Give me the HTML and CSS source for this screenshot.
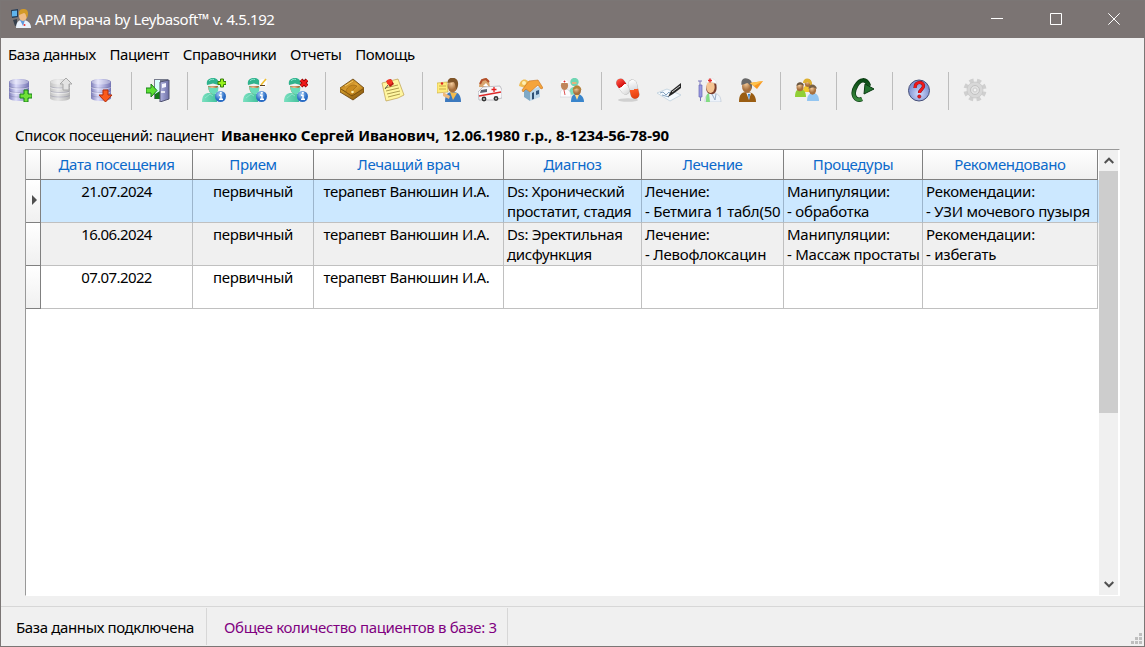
FILE: index.html
```html
<!DOCTYPE html>
<html lang="ru">
<head>
<meta charset="utf-8">
<title>АРМ врача by Leybasoft™ v. 4.5.192</title>
<link rel="stylesheet" href="styles.css">
</head>
<body>
<svg class="defs" width="0" height="0" aria-hidden="true">
  <defs>
    <linearGradient id="gdb"><stop offset="0" stop-color="#7d7db8"/><stop offset=".35" stop-color="#dcdcfa"/><stop offset="1" stop-color="#7474b4"/></linearGradient>
    <linearGradient id="ggray"><stop offset="0" stop-color="#c2c2c2"/><stop offset=".4" stop-color="#e6e6e6"/><stop offset="1" stop-color="#b4b4b4"/></linearGradient>
    <linearGradient id="gdoor"><stop offset="0" stop-color="#b2b4e0"/><stop offset="1" stop-color="#6a6ca4"/></linearGradient>
    <linearGradient id="gteal"><stop offset="0" stop-color="#7be0c0"/><stop offset="1" stop-color="#45c29c"/></linearGradient>
    <radialGradient id="gblue" cx=".4" cy=".3"><stop offset="0" stop-color="#a5cdf6"/><stop offset="1" stop-color="#2a6cc4"/></radialGradient>
    <radialGradient id="ghelp" cx=".5" cy=".65"><stop offset="0" stop-color="#d3ddff"/><stop offset="1" stop-color="#8294d2"/></radialGradient>
    <radialGradient id="gskin" cx=".4" cy=".3"><stop offset="0" stop-color="#f7cf9f"/><stop offset="1" stop-color="#a8703c"/></radialGradient>
    <linearGradient id="ggold" x2="1" y2="1"><stop offset="0" stop-color="#f0b83a"/><stop offset="1" stop-color="#80500a"/></linearGradient>
    <linearGradient id="gflap" x2="1" y2="1"><stop offset="0" stop-color="#a46a10"/><stop offset=".5" stop-color="#e2a636"/><stop offset="1" stop-color="#a8700f"/></linearGradient>
    <linearGradient id="ggreen" y2="1" x2="0"><stop offset="0" stop-color="#0a4a14"/><stop offset="1" stop-color="#3a8a3e"/></linearGradient>
    <linearGradient id="gpill1" gradientUnits="userSpaceOnUse" x1="2" y1="2" x2="12" y2="15"><stop offset="0" stop-color="#ff5040"/><stop offset=".45" stop-color="#d30f0f"/><stop offset=".46" stop-color="#fff"/><stop offset="1" stop-color="#dcdcdc"/></linearGradient>
    <linearGradient id="gpill2" gradientUnits="userSpaceOnUse" x1="15" y1="2" x2="20" y2="21"><stop offset="0" stop-color="#fff"/><stop offset=".5" stop-color="#dadde2"/><stop offset=".51" stop-color="#ff5a22"/><stop offset="1" stop-color="#dd3c0c"/></linearGradient>
    <symbol id="db" viewBox="0 0 24 24"><path d="M1 4c0-4 20-4 20 0v16c0 4-20 4-20 0z"/><ellipse cx="11" cy="4" rx="9.500" ry="2.500" fill="#fff" opacity=".35"/><path d="M1.500 8.500c2 2 17 2 19 0M1.500 13c2 2 17 2 19 0M1.500 17.500c2 2 17 2 19 0" fill="none" stroke="#555580" stroke-opacity=".3" stroke-width=".8"/><path d="M1.500 9.500c2 2 17 2 19 0M1.500 14c2 2 17 2 19 0" fill="none" stroke="#fff" stroke-opacity=".6" stroke-width=".8"/></symbol>
    <symbol id="surgeon" viewBox="0 0 24 24"><path d="M0 24c0-7 3-9 7-9l8 1v8z" fill="url(#gteal)"/><path d="M6 8c0 4 2 8 5 8s5-4 5-8z" fill="url(#gskin)"/><path d="M5 7C4 2 7 0 11 0s6 2 5.500 7L11 5.500z" fill="#2fb38d"/><path d="M7 3c1-1.500 3-2 5-1.500" stroke="#8be6cd" fill="none"/><path d="M6 8.500l3 1.500h5l2.500-1-.5 4c-2 4-6 4-8.500 1z" fill="#6adcb9"/><path d="M3 20l5-4 3 2" stroke="#a6efda" fill="none" opacity=".6"/><circle cx="18.500" cy="18.500" r="5.500" fill="url(#gblue)"/><path d="M17 17.200h2v3.800m-2 .3h4" stroke="#fff" stroke-width="1.500" fill="none"/><circle cx="18.800" cy="14.800" r="1.100" fill="#fff"/></symbol>
  </defs>
</svg>
<div class="window">
  <header class="titlebar">
    <svg class="app-icon" viewBox="0 0 20 20"><path d="M0 1l7-1v8l-6 1z" fill="#223c58"/><path d="M1 2l5-.5V7l-5 .5z" fill="#5fb4ec"/><path d="M2 11l4-1v4l3 2-5 1z" fill="#36404c"/><path d="M5 19c0-5 2-8 6-8 6 0 9 3 9 8z" fill="#eaf2fc"/><path d="M9 11l3 6 2-6z" fill="#5f9ade"/><ellipse cx="12" cy="7" rx="4" ry="5" fill="#f0bc87"/><path d="M8 6c-1-5 2-6 5-6 4 0 5 4 3 9-1-1-1-5-3-5z" fill="#d39a28"/><circle cx="13.500" cy="16" r="1" fill="#e33"/></svg>
    <h1 class="title">АРМ врача by Leybasoft™ v. 4.5.192</h1>
    <div class="controls">
      <svg viewBox="0 0 12 12"><path d="M0 5.500h12"/></svg>
      <svg viewBox="0 0 12 12"><path d="M.5.5h11v11H.5z"/></svg>
      <svg viewBox="0 0 12 12"><path d="M.3.300l11.400 11.400M11.700.300L.3 11.700"/></svg>
    </div>
  </header>
  <nav class="menu"><span>База данных</span><span>Пациент</span><span>Справочники</span><span>Отчеты</span><span>Помощь</span></nav>
  <div class="toolbar">
    <div class="group">
      <svg viewBox="0 0 24 24"><use href="#db" fill="url(#gdb)"/><path d="M16 12h4v4h4v4h-4v4h-4v-4h-4v-4h4z" fill="#6fe038" stroke="#17821a"/></svg>
      <svg viewBox="0 0 24 24"><use href="#db" fill="url(#ggray)"/><path d="M17 0l6 6h-3v6h-6V6h-3z" fill="#e4e4e4" stroke="#a9a9a9"/></svg>
      <svg viewBox="0 0 24 24"><use href="#db" fill="url(#gdb)"/><path d="M13 12h5v5h4l-6.500 7L9 17h4z" fill="#fa5a1c" stroke="#b62c06"/></svg>
    </div>
    <div class="group">
      <svg viewBox="0 0 24 24"><path d="M8 1h14v20H8z" fill="#777b8c"/><path d="M9 2h5v15H9z" fill="#d9ffff"/><path d="M9 16l5-3v8H9z" fill="#17791b"/><path d="M14 4l9-2v19l-9 3z" fill="url(#gdoor)" stroke="#505271"/><path d="M16 6l4-1v4l-4 1z" fill="#f6f6ff"/><path d="M15 14h4" stroke="#fff" stroke-width="1.500"/><path d="M0 10h5V6l6 6.500L5 19v-4H0z" fill="#5fe036" stroke="#178119"/></svg>
    </div>
    <div class="group">
      <svg viewBox="0 0 24 24"><use href="#surgeon"/><path d="M18.500 1h3v2.500H24v3h-2.500V9h-3V6.500H16v-3h2.500z" fill="#98f01a" stroke="#347d0b"/></svg>
      <svg viewBox="0 0 24 24"><use href="#surgeon"/><circle cx="20" cy="5" r="4" fill="#fff" opacity=".8"/><path d="M18 7l5-6" stroke="#f0bd2c" stroke-width="1.600"/><path d="M17 7.500h5" stroke="#5b4021" stroke-width="1"/></svg>
      <svg viewBox="0 0 24 24"><use href="#surgeon"/><path d="M17 2l6 6m0-6l-6 6" stroke="#8f0808" stroke-width="4"/><path d="M17 2l6 6m0-6l-6 6" stroke="#f11b1b" stroke-width="2.300"/></svg>
    </div>
    <div class="group">
      <svg viewBox="0 0 24 24"><path d="M0 10L13 1l11 9v4L13 22 0 14z" fill="url(#ggold)" stroke="#66400a" stroke-width=".8"/><path d="M1 10L13 2l10 8-10 7z" fill="url(#gflap)"/><path d="M1 11l11 7 11-7" stroke="#7a500c" fill="none"/><path d="M6 14c0-4 4-7 8-7l3 1-5 5 2 3-3 1z" fill="#c98a1e" stroke="#8a5b10" stroke-width=".5"/><path d="M5 8l8-5" stroke="#f5cc6a"/><circle cx="12.500" cy="14" r="1.300" fill="#fff0b0"/></svg>
      <svg viewBox="0 0 24 24"><path d="M1 5l16-4 6 16-6 3-12 3z" fill="#fff6a0" stroke="#bb9e4c" stroke-width=".7"/><path d="M4 10l13-3M5 13l13-3M6 16l13-3M7 19l12-3" stroke="#a49244" stroke-width=".9"/><path d="M5 3l5-2 3 5-4 3z" fill="#b41713"/><circle cx="8.500" cy="4" r="2.800" fill="#f43424"/><path d="M7 7l-3 4" stroke="#555"/></svg>
    </div>
    <div class="group">
      <svg viewBox="0 0 24 24"><path d="M0 5l10-1 1 10-11 1z" fill="#ffeb7a" stroke="#c6a83a" stroke-width=".6"/><path d="M2 8h7M2 11h7" stroke="#c8ab48"/><circle cx="5" cy="5.500" r="1.200" fill="#d22"/><path d="M8 24c0-7 2-10 8-10s8 4 8 10z" fill="#3c79be"/><path d="M13 14l3 8 4-7z" fill="#f4bb4d"/><ellipse cx="15.500" cy="8" rx="4.800" ry="6.500" fill="url(#gskin)"/><path d="M10.500 5c0-5 4-6 7-5 5 2 4 8 2 12-1-3-1-7-3-8z" fill="#805528"/><path d="M6 14l7 4-1 3-6-3z" fill="#efba7c"/></svg>
      <svg viewBox="0 0 24 24"><path d="M1 9c0-9 8-11 10-6l1 6z" fill="#d9a56e"/><path d="M2 6l2-4 4-1 3 3" stroke="#b2502c" stroke-width="2" fill="none"/><path d="M5 8l3-3 3 4z" fill="#fff"/><path d="M0 14l5-5 17-1 2 4v8l-8 2-15 0z" fill="#f8f8fa" stroke="#9c9ca5" stroke-width=".6"/><path d="M3 12l6-1v3l-7 1z" fill="#5a6170"/><path d="M1 18l11-2 11-2" stroke="#de2828" stroke-width="1.300"/><path d="M16 9v5m-2.500-2.500h5" stroke="#e31e1e" stroke-width="1.300"/><circle cx="6" cy="21" r="2.400" fill="#333"/><circle cx="18" cy="20.500" r="2.400" fill="#333"/><circle cx="6" cy="21" r="1" fill="#bbb"/><circle cx="18" cy="20.500" r="1" fill="#bbb"/></svg>
      <svg viewBox="0 0 24 24"><path d="M0 8c1-7 6-8 9-5l3 4-6 3z" fill="#efbd54"/><circle cx="5" cy="5" r="2" fill="#fff0b5"/><path d="M5 9l6 5v9l-6-4z" fill="#7fa9c6"/><path d="M11 13l10-5v11l-10 4z" fill="#bed8ea"/><path d="M3 12l7-9 9-1 5 8-2 1-3-4-8 7-4-3-3 3z" fill="#f5a43a" stroke="#c86e18" stroke-width=".6"/><path d="M13 15l2-1v7l-2 .5z" fill="#2f4f72"/><path d="M17 13l3-1v4l-3 1z" fill="#345981"/></svg>
      <svg viewBox="0 0 24 24"><path d="M9 17c0-6 2-8 5-8s6 3 6 7z" fill="#7cdcbb"/><circle cx="14.500" cy="4" r="4.200" fill="#70d6b3"/><path d="M12 4h4.500v2H12z" fill="#e3b37f"/><path d="M0 19c0-6 1-8 5-8s6 3 6 8z" fill="#fbfbfd" stroke="#c0c6cf" stroke-width=".5"/><ellipse cx="4.500" cy="7.500" rx="3.600" ry="4.600" fill="#c08458"/><path d="M.5 5c1-4 7-4 8 0z" fill="#fff"/><path d="M4.500 2.500v2m-1-1h2" stroke="#d22" stroke-width=".8"/><path d="M4 12l1 5" stroke="#d55"/><path d="M11 24c0-6 2-8 6-8s7 3 7 8z" fill="#3985cc"/><ellipse cx="17" cy="12.500" rx="4" ry="5" fill="url(#gskin)"/><path d="M12.500 12c1-6 8-6 9 0-3-2-6-2-9 0z" fill="#b48238"/><path d="M15 17l2 5 2-5z" fill="#ffdb8c"/></svg>
    </div>
    <div class="group">
      <svg viewBox="0 0 24 24"><ellipse cx="12" cy="22" rx="10" ry="1.700" fill="#bbb" opacity=".6"/><path d="M4.500 5l5 7" stroke="#aaa" stroke-width="9" stroke-linecap="round"/><path d="M4.500 5l5 7" stroke="url(#gpill1)" stroke-width="8.400" stroke-linecap="round"/><path d="M16.500 6l2.500 10.500" stroke="#aaa" stroke-width="9" stroke-linecap="round"/><path d="M16.500 6l2.500 10.500" stroke="url(#gpill2)" stroke-width="8.400" stroke-linecap="round"/></svg>
      <svg viewBox="0 0 24 24"><path d="M0 15l10-4 14 6-11 6z" fill="#f6fbff" stroke="#b8cbda" stroke-width=".7"/><path d="M3 15l3-1 3 3 3-3 2 3M5 17l7 2" stroke="#7899b8" fill="none" stroke-width=".9"/><path d="M11 19l3-6L24 5v5l-8 6z" fill="#252525"/><path d="M15 14l8-6" stroke="#ccc"/></svg>
      <svg viewBox="0 0 24 24"><path d="M2 3v4m-2-4h4" stroke="#7c78bb"/><path d="M1 7h3v12H1z" fill="#9999e0" stroke="#6664b4" stroke-width=".7"/><path d="M2.500 19v4" stroke="#7774b8"/><path d="M7 24c0-6 2-9 7-9 6 0 9 3 9 9z" fill="#edf3fb" stroke="#adb9c8" stroke-width=".5"/><path d="M8 24c0-5 0-8 3-9l1 9z" fill="#83dc83"/><path d="M9 7c-2 5 0 8 3 9 5 1 8-3 6-11z" fill="#7b3c2b"/><ellipse cx="12.500" cy="9" rx="4.200" ry="6" fill="#f5c492"/><path d="M8 5c0-6 10-6 11 1-4-2-7-3-11-1z" fill="#fff" stroke="#d5d5d5" stroke-width=".5"/><path d="M12 .5v4m-2-2h4" stroke="#e42a2a" stroke-width="1.500"/><path d="M14 16l3 6 1-6" stroke="#95a9c5" fill="none"/></svg>
      <svg viewBox="0 0 24 24"><path d="M0 24c0-7 2-10 8-10s9 4 9 10z" fill="#9a5d12"/><path d="M7 14l3 8 2-7z" fill="#e8f0fb"/><path d="M9 16l1 6 1-6z" fill="#2c79c5"/><ellipse cx="8" cy="8" rx="5" ry="7" fill="url(#gskin)"/><path d="M2.500 7c-1-6 3-8 7-6 4 1 4 7 3 10-1-3-2-5-4-6z" fill="#686868"/><path d="M11 5l13-2-6 8z" fill="#f79822"/><path d="M11 5l13-2-9 5z" fill="#ffc24c"/></svg>
    </div>
    <div class="group">
      <svg viewBox="0 0 24 24"><path d="M8 14c0-5 2-7 5-7s5 2 5 7z" fill="#f3c72d"/><ellipse cx="13" cy="5" rx="3.300" ry="4" fill="url(#gskin)"/><path d="M8 5c0-6 8-6 9 0 0 3-1 4-1 5-1-3-1-5-3-6-2 1-4 1-5 1z" fill="#deb02f"/><path d="M0 19c0-6 2-8 5-8s6 2 6 8z" fill="#91cf36"/><ellipse cx="5" cy="9" rx="3.500" ry="4.300" fill="url(#gskin)"/><path d="M1.500 8c0-5 7-5 7.500 0-2-2-5-2-7.500 0z" fill="#695742"/><path d="M12 23c0-5 2-8 6-8s6 3 6 8z" fill="#94c6f1"/><ellipse cx="17.500" cy="12" rx="3.600" ry="4.700" fill="url(#gskin)"/><path d="M13.500 11c0-6 7.500-6 8.500 0-3-2-5-2-8.500 0z" fill="#756046"/></svg>
    </div>
    <div class="group">
      <svg viewBox="0 0 24 24"><path d="M11 21C4 24 0 16 5 8c4-7 10-8 13 0" fill="none" stroke="#0a3b12" stroke-width="4.500"/><path d="M11 21C4 24 0 16 5 8c4-7 10-8 13 0" fill="none" stroke="url(#ggreen)" stroke-width="3"/><path d="M13 16l1-10 9 5z" fill="#247330" stroke="#0a3b12"/></svg>
    </div>
    <div class="group">
      <svg viewBox="0 0 24 24"><circle cx="12" cy="12.500" r="10.500" fill="url(#ghelp)" stroke="#444e78"/><path d="M8 10c0-7 8.500-7 8.500-2 0 3.500-4 3.500-4 7" fill="none" stroke="#7b1020" stroke-width="3.200"/><path d="M8 10c0-7 8.500-7 8.500-2 0 3.500-4 3.500-4 7" fill="none" stroke="#f21818" stroke-width="2.400"/><circle cx="12.300" cy="18.500" r="1.700" fill="#f21818" stroke="#7b1020" stroke-width=".5"/></svg>
    </div>
    <div class="group">
      <svg viewBox="0 0 24 24"><circle cx="12" cy="12" r="9.500" fill="none" stroke="#cfcfcf" stroke-width="4" stroke-dasharray="4.200 3.260" transform="rotate(10 12 12)"/><circle cx="12" cy="12" r="8" fill="#d8d8d8" stroke="#c6c6c6" stroke-width=".7"/><circle cx="12" cy="12" r="4.500" fill="#e2e2e2" stroke="#c2c2c2"/><circle cx="12" cy="12" r="2" fill="#f2f2f2" stroke="#ccc"/></svg>
    </div>
  </div>
  <main class="content">
    <p class="caption"><span>Список посещений: пациент</span><b class="cap-name">Иваненко Сергей Иванович, 12.06.1980 г.р., 8-1234-56-78-90</b></p>
    <div class="grid-box">
      <div class="grid">
        <div class="row head"><div></div><div>Дата посещения</div><div>Прием</div><div>Лечащий врач</div><div>Диагноз</div><div>Лечение</div><div>Процедуры</div><div>Рекомендовано</div></div>
        <div class="row selected"><div class="marker"><svg viewBox="0 0 5 10"><path d="M0 0l5 5-5 5z"/></svg></div><div class="c date">21.07.2024</div><div class="c">первичный</div><div class="c doctor">терапевт Ванюшин И.А.</div><div>Ds: Хронический<br>простатит, стадия</div><div class="wide">Лечение:<br>- Бетмига 1 табл(50</div><div class="wide">Манипуляции:<br>- обработка</div><div class="wide">Рекомендации:<br>- УЗИ мочевого пузыря</div></div>
        <div class="row alt"><div class="marker"></div><div class="c date">16.06.2024</div><div class="c">первичный</div><div class="c doctor">терапевт Ванюшин И.А.</div><div>Ds: Эректильная<br>дисфункция</div><div class="wide">Лечение:<br>- Левофлоксацин</div><div class="wide">Манипуляции:<br>- Массаж простаты</div><div class="wide">Рекомендации:<br>- избегать</div></div>
        <div class="row"><div class="marker"></div><div class="c date">07.07.2022</div><div class="c">первичный</div><div class="c doctor">терапевт Ванюшин И.А.</div><div></div><div></div><div></div><div></div></div>
      </div>
      <div class="scrollbar">
        <svg viewBox="0 0 10 7"><path d="M.7 6L5 1.700 9.300 6"/></svg>
        <div class="thumb"></div>
        <svg viewBox="0 0 10 7"><path d="M.7 1L5 5.300 9.300 1"/></svg>
      </div>
    </div>
  </main>
  <footer class="status">
    <div class="s1"><span>База данных подключена</span></div><div class="s2"><span>Общее количество пациентов в базе: 3</span></div>
    <svg class="grip" viewBox="0 0 11 11"><path d="M8 0h3v3H8zM4 4h3v3H4zM8 4h3v3H8zM0 8h3v3H0zM4 8h3v3H4zM8 8h3v3H8z"/></svg>
  </footer>
</div>
</body>
</html>
```
FILE: styles.css
```css
* { box-sizing: border-box; }
body {
  margin: 0;
  font: 15px/20px "Noto Sans", "Open Sans", sans-serif;
  letter-spacing: -0.34px;
  color: #000;
  overflow: hidden;
}
.defs { position: absolute; }
.window {
  width: 1145px;
  height: 647px;
  display: flex;
  flex-direction: column;
  background: #f0f0f0;
  border: 1px solid #7b7675;
}
.titlebar {
  height: 37px;
  flex: none;
  display: flex;
  align-items: center;
  background: #7b7473;
  color: #fff;
  padding: 0 0 1px 10px;
}
.app-icon { width: 20px; height: 20px; }
.title { margin: 0 0 0 4px; font-size: 15px; font-weight: 400; letter-spacing: -0.4px; white-space: nowrap; }
.controls { margin-left: auto; display: flex; gap: 46px; padding-right: 24px; }
.controls svg { width: 12px; height: 12px; fill: none; stroke: #fff; stroke-width: 1; }
.controls svg:first-child { margin-right: 1px; }
.menu { height: 34px; display: flex; align-items: center; gap: 13.6px; padding: 0 0 2px 7px; letter-spacing: -0.38px; white-space: nowrap; }
.toolbar { height: 38px; display: flex; margin: -1px 0 1px -2px; }
.group { display: flex; align-items: center; position: relative; }
.group svg { width: 24px; height: 24px; margin: 0 8.5px; }
.group + .group { margin-left: 15px; }
.group + .group::before {
  content: "";
  position: absolute;
  left: -6px;
  top: 1px;
  width: 1px;
  height: 38px;
  background: #bdbdbd;
}
.content { padding: 15px 0 0 14px; height: 496px; flex: none; }
.caption { margin: 0; height: 24px; line-height: 20px; display: flex; gap: 7px; white-space: nowrap; }
.cap-name { letter-spacing: -0.05px; }
.grid-box {
  margin-left: 10px;
  width: 1095px;
  height: 447px;
  background: #fff;
  display: flex;
  border: 1px solid #fff;
  border-top-color: #999;
  border-left-color: #999;
}
.grid { width: 1073px; }
.row {
  display: grid;
  grid-template-columns: 15px 152px 121px 190px 138px 142px 139px 175px;
  height: 43px;
  white-space: nowrap;
  line-height: 20px;
}
.row > div { padding: 1px 0 0 3px; border-right: 1px solid #c0c0c0; border-bottom: 1px solid #c0c0c0; overflow: hidden; }
.row > .c { text-align: center; padding: 1px 0 0; }
.row > .date { letter-spacing: -0.6px; }
.row > .doctor { padding-right: 4px; }
.row > .wide { letter-spacing: -0.24px; }
.row.head { height: 30px; }
.row.head > div {
  padding: 4px 0 0;
  text-align: center;
  color: #0c6acb;
  background: linear-gradient(#fff, #f0f0f0);
  border-color: #808080;
}
.row > .marker {
  padding: 0 3px 2px 0;
  display: flex;
  align-items: center;
  justify-content: flex-end;
  background: linear-gradient(#fff, #f0f0f0);
  border-color: #808080;
}
.marker svg { width: 5px; height: 10px; fill: #505050; }
.selected { background: #cce8ff; }
.selected > div:not(.marker) { border-right-color: #9cb5cc; }
.alt { background: #f0f0f0; }
.scrollbar {
  width: 19px;
  background: #f0f0f0;
  display: flex;
  flex-direction: column;
  align-items: center;
  padding: 7px 0;
}
.scrollbar svg { width: 10px; height: 7px; fill: none; stroke: #505050; stroke-width: 2; flex: none; }
.scrollbar svg:last-child { margin-top: auto; }
.thumb { width: 19px; height: 242px; margin-top: 7px; background: #cdcdcd; }
.status { flex: 1; display: flex; border-top: 1px solid #d7d7d7; position: relative; white-space: nowrap; padding-top: 1px; }
.status div { display: flex; align-items: center; border-right: 1px solid #d7d7d7; height: 37px; }
.s1 { width: 206px; padding-left: 15px; letter-spacing: -0.37px; }
.s2 { width: 301px; padding-left: 17px; color: #800080; }
.grip { position: absolute; right: 2px; bottom: 2px; width: 11px; height: 11px; fill: #bfbfbf; }
```
